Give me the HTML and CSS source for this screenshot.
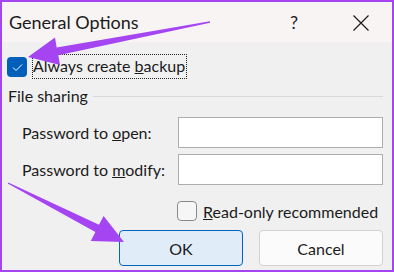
FILE: index.html
```html
<!DOCTYPE html>
<html lang="en">
<head>
    <meta charset="UTF-8">
    <title>General Options</title>
    <link rel="stylesheet" href="styles.css">
</head>
<body>
    <div class="dialog">
        <!-- title bar -->
        <div class="titlebar">
            <span class="title">General Options</span>
            <span class="help">?</span>
            <span class="close">
                <svg width="16" height="16" viewBox="0 0 16 16"><path d="M0.5 0.5 L15.5 15.5 M15.5 0.5 L0.5 15.5" stroke="#1b1b1b" stroke-width="1.2" fill="none"/></svg>
            </span>
        </div>

        <div class="content">
            <div class="check-row">
                <span class="box checked">
                    <svg width="20" height="20" viewBox="0 0 20 20"><path d="M6 10.5 L9 13.5 L15 7.5" stroke="#fff" stroke-width="1" fill="none"/></svg>
                </span>
                <span class="focus">Always create <u>b</u>ackup</span>
            </div>

            <div class="group-head">
                <span>File sharing</span>
                <span class="rule"></span>
            </div>

            <div class="fields">
                <label for="pwOpen">Password to <u>o</u>pen:</label>
                <input type="password" id="pwOpen">
                <label for="pwModify">Password to <u>m</u>odify:</label>
                <input type="password" id="pwModify">
            </div>

            <div class="readonly-row">
                <span class="box"></span>
                <span><u>R</u>ead-only recommended</span>
            </div>

            <div class="buttons">
                <button class="ok">OK</button>
                <button>Cancel</button>
            </div>
        </div>

        <!-- annotation arrows drawn over the dialog -->
        <svg class="arrows" width="394" height="272" viewBox="0 0 394 272">
            <polygon points="28,57 55,37.6 56.7,47.4 209.9,21.3 210.1,22.7 58.3,55.2 60,65" fill="#a545f2"/>
            <polygon points="124,242 103.6,215.9 99,224.8 8.3,182.4 7.7,183.6 95.4,232 90.8,240.9" fill="#a545f2"/>
        </svg>
    </div>
</body>
</html>
```

FILE: styles.css
```css
body {
    margin: 0;
    font-family: Lato, "Noto Sans", sans-serif;
    color: #1b1b1b;
}
.dialog {
    position: relative;
    width: 394px;
    height: 272px;
    box-sizing: border-box;
    border: 2px solid #a545f2;
    background-color: #f0f0f0;
    overflow: hidden;
}
.titlebar {
    display: flex;
    align-items: center;
    height: 40px;
    background-color: #f8f4f4;
    padding-left: 7px;
}
.title {
    font-size: 18px;
    margin-top: -1px;
}
.help {
    margin-left: auto;
    font-size: 18px;
    margin-right: 55px;
}
.close {
    display: flex;
    margin-right: 23px;
    margin-top: 1px;
}
.content {
    padding: 12px 9px 0 5px;
}
.check-row {
    display: flex;
    align-items: center;
    gap: 5px;
    height: 25px;
    font-size: 16px;
}
.box {
    display: flex;
    width: 20px;
    height: 20px;
    box-sizing: border-box;
    border: 1px solid #8a8a8a;
    border-radius: 4px;
    background-color: #f6f6f6;
}
.box.checked {
    border: none;
    background-color: #005fb8;
}
.focus {
    border: 1px dotted #222;
    padding: 1px 1px 2px 0;
    line-height: 20px;
}
.group-head {
    display: flex;
    align-items: center;
    margin-top: 7px;
    padding-left: 1px;
    font-size: 16px;
    line-height: 20px;
}
.rule {
    flex: 1;
    height: 1px;
    margin-left: 5px;
    background-color: #d9d9d9;
}
.fields {
    display: grid;
    grid-template-columns: 156px 205px;
    row-gap: 6px;
    align-items: center;
    margin-top: 11px;
    padding-left: 15px;
    font-size: 16px;
}
.fields input {
    height: 31px;
    box-sizing: border-box;
    border: 1px solid #adadad;
    background: white;
    margin: 0;
}
.readonly-row {
    display: flex;
    align-items: center;
    gap: 6px;
    margin-top: 16px;
    margin-left: 170px;
    font-size: 16px;
}
.buttons {
    display: flex;
    justify-content: flex-end;
    gap: 16px;
    margin-top: 9px;
}
button {
    width: 124px;
    height: 36px;
    font-family: Lato, "Noto Sans", sans-serif;
    font-size: 16px;
    color: #1b1b1b;
    background-color: #fbfbfb;
    border: 1px solid #d1d1d1;
    border-radius: 4px;
}
button.ok {
    background-color: #e0edf9;
    border-color: #0067c0;
}
.arrows {
    position: absolute;
    top: -2px;
    left: -2px;
}
```
